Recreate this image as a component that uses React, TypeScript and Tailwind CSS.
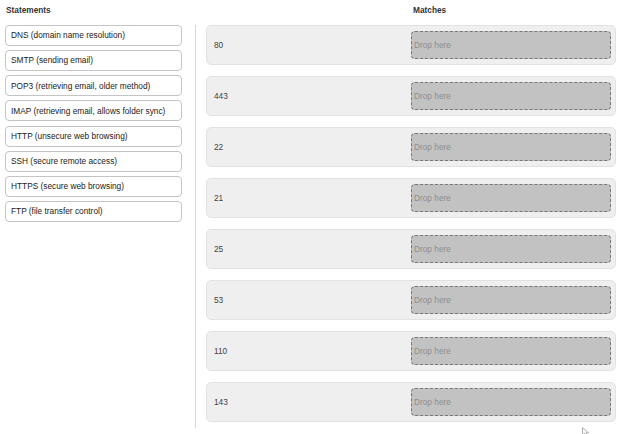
import React from 'react';

const statements = [
  'DNS (domain name resolution)',
  'SMTP (sending email)',
  'POP3 (retrieving email, older method)',
  'IMAP (retrieving email, allows folder sync)',
  'HTTP (unsecure web browsing)',
  'SSH (secure remote access)',
  'HTTPS (secure web browsing)',
  'FTP (file transfer control)',
];

const ports = ['80', '443', '22', '21', '25', '53', '110', '143'];

const App: React.FC = () => {
  return (
    <div className="relative w-[620px] h-[434px] overflow-hidden bg-white font-['Liberation_Sans',Arial,sans-serif] text-[8.3px]">
      <div className="flex h-[21px] items-center font-bold text-[#333]">
        <div className="w-[196px] pl-[6px]">Statements</div>
        <div className="pl-[217px]">Matches</div>
      </div>

      <div className="flex mt-[4px]">
        <div className="w-[196px] h-[403px] border-r border-[#d9d9d9] pl-[5px] flex flex-col gap-[4.15px]">
          {statements.map((s) => (
            <div
              key={s}
              className="w-[177px] h-[21px] flex items-center pl-[5px] border border-[#c4c4c4] rounded-[4px] bg-white text-[#222]"
            >
              {s}
            </div>
          ))}
        </div>

        <div className="pl-[10px] flex flex-col gap-[11px]">
          {ports.map((p) => (
            <div
              key={p}
              className="w-[410px] h-[40px] flex items-center pl-[7px] pr-[4px] bg-[#efefef] border border-[#e2e2e2] rounded-[5px]"
            >
              <span className="flex-1 text-[#444]">{p}</span>
              <div className="w-[200px] h-[28px] flex items-center pl-[2px] bg-[#c2c2c2] border border-dashed border-[#777] rounded-[4px] text-[#8e8e8e]">
                Drop here
              </div>
            </div>
          ))}
        </div>
      </div>

      <svg className="absolute left-[582px] top-[427px]" width="9" height="10" viewBox="0 0 9 10">
        <path d="M0.5 0.5 L0.5 8 L2.5 6.2 L4 9.5 L5.3 9 L3.9 5.8 L6.5 5.8 Z" fill="white" stroke="#999" strokeWidth="0.8" />
      </svg>
    </div>
  );
};

export default App;
